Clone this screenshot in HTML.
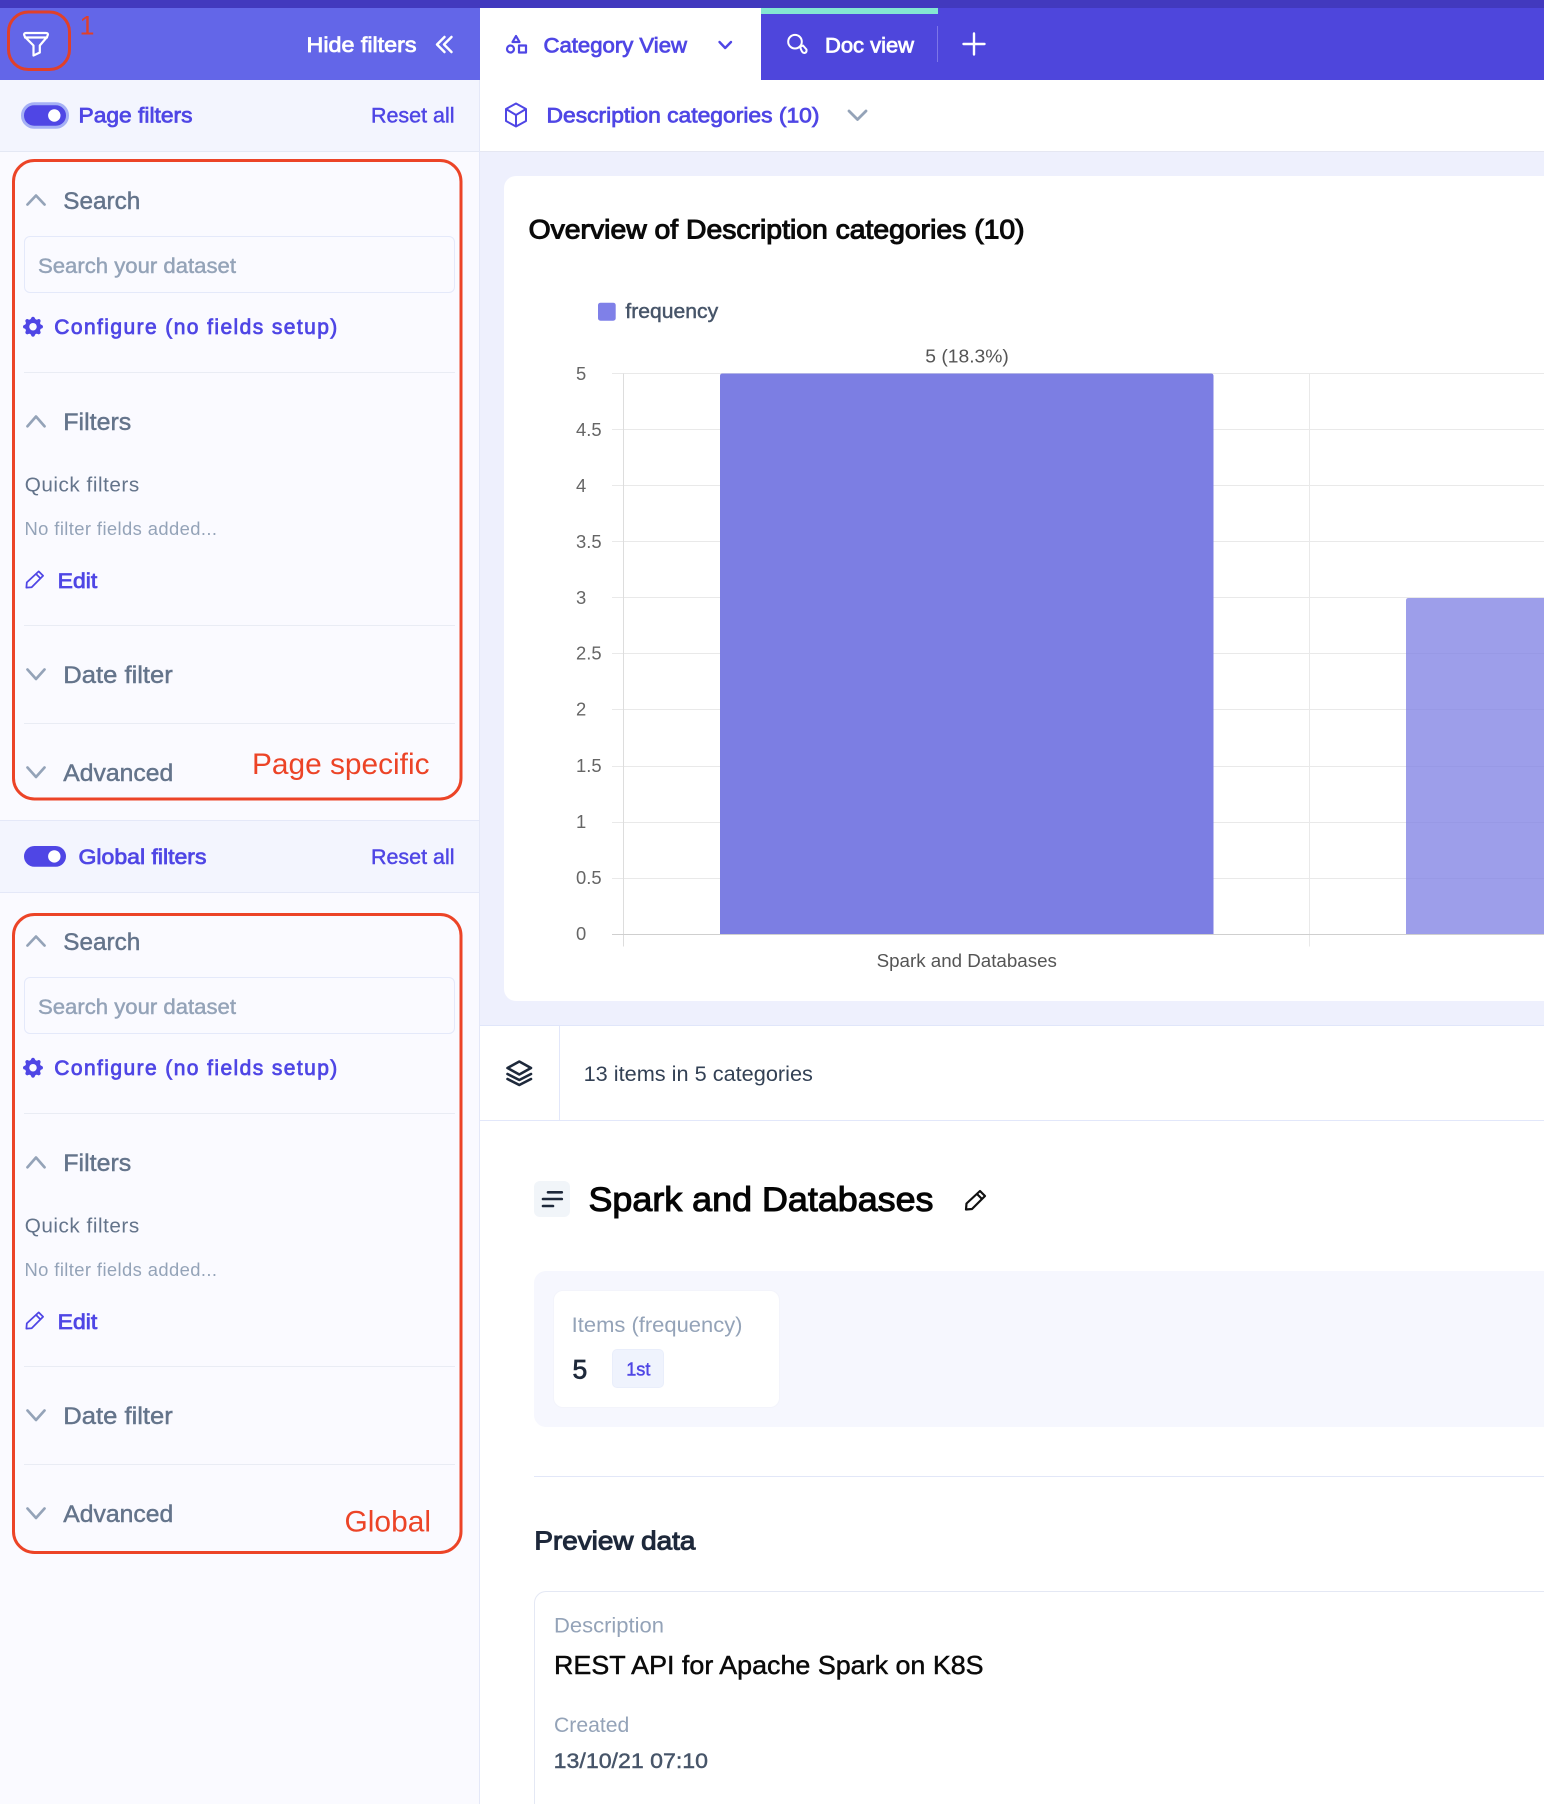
<!DOCTYPE html>
<html lang="en">
<head>
<meta charset="utf-8">
<title>Category View</title>
<style>
html,body{margin:0;padding:0;width:1544px;height:1804px;overflow:hidden;background:#fff;font-family:"Liberation Sans",sans-serif}
#page{position:relative;width:1544px;height:1804px;overflow:hidden;background:#fff}
.b{position:absolute;box-sizing:border-box}
svg{position:absolute;left:0;top:0;display:block}
text{font-family:"Liberation Sans",sans-serif;white-space:pre}
.m{stroke-width:.45px}
.s{stroke-width:.75px}
.t{stroke-width:1.05px}
.ind{fill:#4F46E5;stroke:#4F46E5}
.sl{fill:#64748B;stroke:#64748B}
.mut{fill:#94A3B8;stroke:#94A3B8}
.wh{fill:#fff;stroke:#fff}
.red{fill:#EC4427;font-size:29.5px}
.ic{fill:none;stroke-linecap:round;stroke-linejoin:round}
</style>
</head>
<body>
<div id="page">
<!-- top strip and header -->
<div class="b" style="left:0;top:0;width:1544px;height:8px;background:#4239BE"></div>
<div class="b" style="left:0;top:8px;width:480px;height:72px;background:#6366E8"></div>
<div class="b" style="left:480px;top:8px;width:281px;height:72px;background:#fff"></div>
<div class="b" style="left:761px;top:8px;width:783px;height:72px;background:#4E46DC"></div>
<div class="b" style="left:761px;top:8px;width:177px;height:6px;background:#84E7D2"></div>
<div class="b" style="left:937px;top:26px;width:1px;height:36px;background:#7D76E8"></div>
<!-- sidebar -->
<div class="b" style="left:0;top:80px;width:480px;height:1724px;background:#FAFAFF;border-right:1px solid #E4E8F8"></div>
<div class="b" style="left:0;top:80px;width:479px;height:72px;background:#F3F5FE;border-bottom:1px solid #E4E8F4"></div>
<div class="b" style="left:0;top:820px;width:479px;height:73px;background:#F3F5FE;border-top:1px solid #E4E8F8;border-bottom:1px solid #E4E8F8"></div>
<!-- main sub header -->
<div class="b" style="left:480px;top:151px;width:1064px;height:875px;background:#EEF0FD;border-top:1px solid #E5E7F2;border-bottom:1px solid #E0E6FA"></div>
<div class="b" style="left:504px;top:176px;width:1040px;height:825px;background:#fff;border-radius:12px 0 0 12px"></div>
<div class="b" style="left:480px;top:1120px;width:1064px;height:1px;background:#E2E7FA"></div>
<div class="b" style="left:559px;top:1026px;width:1px;height:94px;background:#E2E7FA"></div>
<!-- panels -->
<div class="b" style="left:534px;top:1181px;width:36px;height:36px;background:#F1F5F9;border-radius:6px"></div>
<div class="b" style="left:534px;top:1271px;width:1010px;height:156px;background:#F6F7FE;border-radius:12px 0 0 12px"></div>
<div class="b" style="left:553px;top:1290px;width:227px;height:118px;background:#fff;border-radius:10px;border:1px solid #F3F4FB"></div>
<div class="b" style="left:612px;top:1349px;width:52px;height:39px;background:#EFF3FD;border-radius:5px;border:1px solid #E9EEFB"></div>
<div class="b" style="left:534px;top:1476px;width:1010px;height:1px;background:#E2E7F8"></div>
<div class="b" style="left:534px;top:1591px;width:1010px;height:213px;background:#fff;border-radius:12px 0 0 0;border:1px solid #E4E8F4;border-right:0;border-bottom:0"></div>
<!-- inputs -->
<div class="b" style="left:24px;top:236px;width:431px;height:57px;border:1px solid #E4E9FA;border-radius:6px"></div>
<div class="b" style="left:24px;top:977px;width:431px;height:57px;border:1px solid #E4E9FA;border-radius:6px"></div>
<!-- sidebar dividers -->
<div class="b" style="left:24px;top:372px;width:431px;height:1px;background:#E9ECF4"></div>
<div class="b" style="left:24px;top:625px;width:431px;height:1px;background:#E9ECF4"></div>
<div class="b" style="left:24px;top:723px;width:431px;height:1px;background:#E9ECF4"></div>
<div class="b" style="left:24px;top:1113px;width:431px;height:1px;background:#E9ECF4"></div>
<div class="b" style="left:24px;top:1366px;width:431px;height:1px;background:#E9ECF4"></div>
<div class="b" style="left:24px;top:1464px;width:431px;height:1px;background:#E9ECF4"></div>

<svg width="1544" height="1804" viewBox="0 0 1544 1804" xmlns="http://www.w3.org/2000/svg">
  <!-- header left -->
  <rect x="8.5" y="12" width="61" height="57.5" rx="20" fill="none" stroke="#E0402A" stroke-width="3"/>
  <text x="79.5" y="34.5" fill="#E0402A" font-size="27">1</text>
  <path class="ic" d="M26 33H46Q48.3 33 47.8 35L47 37L39.8 45.5V52.5L33.5 55.5V45.5L25 37L24.2 35Q23.8 33 26 33ZM25 37.5H47" stroke="#fff" stroke-width="2.2"/>
  <text class="wh s" x="306.5" y="52" font-size="21" textLength="110" lengthAdjust="spacingAndGlyphs">Hide filters</text>
  <path class="ic" d="M444.5 37L437 44.5L444.5 52M451.5 37L444 44.5L451.5 52" stroke="#fff" stroke-width="2.5"/>

  <!-- tabs -->
  <g class="ic" stroke="#4F46E5" stroke-width="2.2">
    <path d="M516 36L519.5 42H512.5Z"/>
    <circle cx="510.5" cy="49" r="3.5"/>
    <rect x="519" y="45.5" width="7" height="7"/>
  </g>
  <text class="ind s" x="543.5" y="52.3" font-size="21" textLength="143.5" lengthAdjust="spacingAndGlyphs">Category View</text>
  <path class="ic" d="M719.5 42L725.2 48L731 42" stroke="#4F46E5" stroke-width="2.4"/>
  <g class="ic" stroke="#fff" stroke-width="2">
    <circle cx="795" cy="41.7" r="6.8"/>
    <path d="M800 47L803 45.5L806.5 49.5Q807 52.5 804.5 53Q802.5 53 801.5 50.5Z"/>
  </g>
  <text class="wh s" x="825" y="52.3" font-size="21" textLength="89" lengthAdjust="spacingAndGlyphs">Doc view</text>
  <path d="M963.5 44H984.5M974 33.5V54.5" stroke="#fff" stroke-width="2.4" stroke-linecap="round"/>

  <!-- page filter header -->
  <rect x="22.5" y="103.8" width="45" height="23.5" rx="11.7" fill="#4F46E5" stroke="#A5B0F5" stroke-width="3"/>
  <circle cx="54.3" cy="115.5" r="6.2" fill="#fff"/>
  <text class="ind s" x="78.5" y="122.7" font-size="21" textLength="114" lengthAdjust="spacingAndGlyphs">Page filters</text>
  <text class="ind m" x="371" y="122.7" font-size="21" textLength="83.5" lengthAdjust="spacingAndGlyphs">Reset all</text>

  <!-- sub header -->
  <g class="ic" stroke="#4F46E5" stroke-width="2">
    <path d="M516 103.5L526 109V121L516 126.5L506 121V109ZM506 109L516 115L526 109M516 115V126.5"/>
  </g>
  <text class="ind s" x="546.5" y="122.7" font-size="21" textLength="273" lengthAdjust="spacingAndGlyphs">Description categories (10)</text>
  <path class="ic" d="M849 111L857.5 119.5L866 111" stroke="#94A3B8" stroke-width="2.8"/>

  <!-- red boxes -->
  <rect x="13.5" y="160.5" width="447.5" height="638.5" rx="21" fill="none" stroke="#EC4427" stroke-width="3"/>
  <rect x="13.5" y="914.5" width="447.5" height="638" rx="21" fill="none" stroke="#EC4427" stroke-width="3"/>
  <text class="red" x="252" y="774" textLength="177.5" lengthAdjust="spacingAndGlyphs">Page specific</text>
  <text class="red" x="344.5" y="1531.7" textLength="86.5" lengthAdjust="spacingAndGlyphs">Global</text>

  <!-- page section -->
  <g>
    <path class="ic" d="M27.5 204.5L36 195.5L44.5 204.5" stroke="#94A3B8" stroke-width="2.7"/>
    <text class="sl m" x="63.3" y="209" font-size="24" textLength="77" lengthAdjust="spacingAndGlyphs">Search</text>
    <text class="mut m" x="38" y="272.8" font-size="21" textLength="198" lengthAdjust="spacingAndGlyphs">Search your dataset</text>
    <path fill="#4F46E5" fill-rule="evenodd" transform="translate(20.5 314.2) scale(1.25)" d="M11.49 3.17c-.38-1.56-2.6-1.56-2.98 0a1.532 1.532 0 01-2.286.948c-1.372-.836-2.942.734-2.106 2.106.54.886.061 2.042-.947 2.287-1.561.379-1.561 2.6 0 2.978a1.532 1.532 0 01.947 2.287c-.836 1.372.734 2.942 2.106 2.106a1.532 1.532 0 012.287.947c.379 1.561 2.6 1.561 2.978 0a1.533 1.533 0 012.287-.947c1.372.836 2.942-.734 2.106-2.106a1.533 1.533 0 01.947-2.287c1.561-.379 1.561-2.6 0-2.978a1.532 1.532 0 01-.947-2.287c.836-1.372-.734-2.942-2.106-2.106a1.532 1.532 0 01-2.287-.947zM10 13a3 3 0 100-6 3 3 0 000 6z"/>
    <text class="ind s" x="54.3" y="334" font-size="21" textLength="283" lengthAdjust="spacing">Configure (no fields setup)</text>
    <path class="ic" d="M27.5 426.3L36 416.5L44.5 426.3" stroke="#94A3B8" stroke-width="2.7"/>
    <text class="sl m" x="63.3" y="430" font-size="24" textLength="68" lengthAdjust="spacingAndGlyphs">Filters</text>
    <text fill="#64748B" x="24.7" y="491.5" font-size="20.7" textLength="114.5" lengthAdjust="spacing">Quick filters</text>
    <text fill="#94A3B8" x="24.5" y="535.2" font-size="18.4" textLength="192.5" lengthAdjust="spacing">No filter fields added...</text>
    <path class="ic" stroke="#4F46E5" stroke-width="2" transform="translate(25.5 570.5) scale(.88)" d="M1 19.5L1.5 13.5L15 1L20 6L7 19ZM12 4L17 9"/>
    <text class="ind s" x="57.7" y="588" font-size="21" textLength="39.5" lengthAdjust="spacingAndGlyphs">Edit</text>
    <path class="ic" d="M27.5 669.5L36 679L44.5 669.5" stroke="#94A3B8" stroke-width="2.7"/>
    <text class="sl m" x="63.3" y="683.2" font-size="24" textLength="109.5" lengthAdjust="spacingAndGlyphs">Date filter</text>
    <path class="ic" d="M27.5 767.5L36 777L44.5 767.5" stroke="#94A3B8" stroke-width="2.7"/>
    <text class="sl m" x="63.3" y="781" font-size="24" textLength="110" lengthAdjust="spacingAndGlyphs">Advanced</text>
  </g>

  <!-- global header -->
  <rect x="24" y="846" width="42" height="20.8" rx="10.4" fill="#4F46E5"/>
  <circle cx="54.3" cy="856.4" r="6.2" fill="#fff"/>
  <text class="ind s" x="78.5" y="864" font-size="21" textLength="128" lengthAdjust="spacingAndGlyphs">Global filters</text>
  <text class="ind m" x="371" y="864" font-size="21" textLength="83.5" lengthAdjust="spacingAndGlyphs">Reset all</text>

  <!-- global section -->
  <g transform="translate(0 741)">
    <path class="ic" d="M27.5 204.5L36 195.5L44.5 204.5" stroke="#94A3B8" stroke-width="2.7"/>
    <text class="sl m" x="63.3" y="209" font-size="24" textLength="77" lengthAdjust="spacingAndGlyphs">Search</text>
    <text class="mut m" x="38" y="272.8" font-size="21" textLength="198" lengthAdjust="spacingAndGlyphs">Search your dataset</text>
    <path fill="#4F46E5" fill-rule="evenodd" transform="translate(20.5 314.2) scale(1.25)" d="M11.49 3.17c-.38-1.56-2.6-1.56-2.98 0a1.532 1.532 0 01-2.286.948c-1.372-.836-2.942.734-2.106 2.106.54.886.061 2.042-.947 2.287-1.561.379-1.561 2.6 0 2.978a1.532 1.532 0 01.947 2.287c-.836 1.372.734 2.942 2.106 2.106a1.532 1.532 0 012.287.947c.379 1.561 2.6 1.561 2.978 0a1.533 1.533 0 012.287-.947c1.372.836 2.942-.734 2.106-2.106a1.533 1.533 0 01.947-2.287c1.561-.379 1.561-2.6 0-2.978a1.532 1.532 0 01-.947-2.287c.836-1.372-.734-2.942-2.106-2.106a1.532 1.532 0 01-2.287-.947zM10 13a3 3 0 100-6 3 3 0 000 6z"/>
    <text class="ind s" x="54.3" y="334" font-size="21" textLength="283" lengthAdjust="spacing">Configure (no fields setup)</text>
    <path class="ic" d="M27.5 426.3L36 416.5L44.5 426.3" stroke="#94A3B8" stroke-width="2.7"/>
    <text class="sl m" x="63.3" y="430" font-size="24" textLength="68" lengthAdjust="spacingAndGlyphs">Filters</text>
    <text fill="#64748B" x="24.7" y="491.5" font-size="20.7" textLength="114.5" lengthAdjust="spacing">Quick filters</text>
    <text fill="#94A3B8" x="24.5" y="535.2" font-size="18.4" textLength="192.5" lengthAdjust="spacing">No filter fields added...</text>
    <path class="ic" stroke="#4F46E5" stroke-width="2" transform="translate(25.5 570.5) scale(.88)" d="M1 19.5L1.5 13.5L15 1L20 6L7 19ZM12 4L17 9"/>
    <text class="ind s" x="57.7" y="588" font-size="21" textLength="39.5" lengthAdjust="spacingAndGlyphs">Edit</text>
    <path class="ic" d="M27.5 669.5L36 679L44.5 669.5" stroke="#94A3B8" stroke-width="2.7"/>
    <text class="sl m" x="63.3" y="683.2" font-size="24" textLength="109.5" lengthAdjust="spacingAndGlyphs">Date filter</text>
    <path class="ic" d="M27.5 767.5L36 777L44.5 767.5" stroke="#94A3B8" stroke-width="2.7"/>
    <text class="sl m" x="63.3" y="781" font-size="24" textLength="110" lengthAdjust="spacingAndGlyphs">Advanced</text>
  </g>

  <!-- chart -->
  <text x="528.6" y="238.5" fill="#0a0a0a" stroke="#0a0a0a" class="t" font-size="26.5" textLength="496" lengthAdjust="spacingAndGlyphs">Overview of Description categories (10)</text>
  <rect x="598" y="302.7" width="17.7" height="18" rx="2.5" fill="#7F80E8"/>
  <text x="625.4" y="318" fill="#475569" stroke="#475569" class="m" font-size="20" textLength="92.8" lengthAdjust="spacingAndGlyphs">frequency</text>
  <g stroke="#E9E9E9" stroke-width="1">
    <path d="M612 373.5H1544M612 429.5H1544M612 485.5H1544M612 541.5H1544M612 597.5H1544M612 653.5H1544M612 709.5H1544M612 766.5H1544M612 822.5H1544M612 878.5H1544"/>
    <path d="M1309.5 373.5V946.5"/>
  </g>
  <path d="M623.5 373.5V946.5" stroke="#DDDDDD"/>
  <path d="M612 934.5H1544" stroke="#CFCFCF"/>
  <g fill="#666" font-size="18.4">
    <text x="576" y="380">5</text><text x="576" y="436">4.5</text><text x="576" y="492">4</text><text x="576" y="548">3.5</text><text x="576" y="604">3</text><text x="576" y="659.7">2.5</text><text x="576" y="715.7">2</text><text x="576" y="772">1.5</text><text x="576" y="828">1</text><text x="576" y="884">0.5</text><text x="576" y="940">0</text>
  </g>
  <path d="M720 934V376q0-2.5 2.5-2.5H1211q2.5 0 2.5 2.5V934Z" fill="#7C7EE3"/>
  <path d="M1406 934V600.5q0-2.5 2.5-2.5H1544V934Z" fill="#7C7EE3" fill-opacity=".75"/>
  <text x="925.3" y="362.3" fill="#555" font-size="18.4" textLength="83.5" lengthAdjust="spacingAndGlyphs">5 (18.3%)</text>
  <text x="876.6" y="967" fill="#555" font-size="18.4" textLength="180.3" lengthAdjust="spacingAndGlyphs">Spark and Databases</text>

  <!-- items row -->
  <g class="ic" stroke="#1E293B" stroke-width="2.6">
    <path d="M519.3 1061.5L531 1068L519.3 1074.5L507.5 1068Z"/>
    <path d="M507.5 1074L519.3 1080L531 1074M507.5 1079L519.3 1085L531 1079"/>
  </g>
  <text fill="#334155" x="583.6" y="1081" font-size="21" textLength="229.3" lengthAdjust="spacingAndGlyphs">13 items in 5 categories</text>

  <!-- title -->
  <path d="M548 1192.3H561.8M543 1199H561.8M543 1206H553" stroke="#1E293B" stroke-width="2.6" stroke-linecap="round"/>
  <text x="588.5" y="1211.2" fill="#050505" stroke="#050505" class="t" font-size="34.5" textLength="345" lengthAdjust="spacingAndGlyphs">Spark and Databases</text>
  <path class="ic" stroke="#111" stroke-width="2.2" transform="translate(965 1190)" d="M1 19.5L1.5 13.5L15 1L20 6L7 19ZM12 4L17 9"/>

  <!-- stat card -->
  <text fill="#94A3B8" x="571.7" y="1332" font-size="21" textLength="170.8" lengthAdjust="spacingAndGlyphs">Items (frequency)</text>
  <text x="572.5" y="1378.3" fill="#1E293B" stroke="#1E293B" class="s" font-size="26.5">5</text>
  <text class="ind m" x="626.2" y="1375.5" font-size="18.5" textLength="24.2" lengthAdjust="spacingAndGlyphs">1st</text>

  <!-- preview -->
  <text x="534.4" y="1549.3" fill="#1E293B" stroke="#1E293B" class="t" font-size="26" textLength="161" lengthAdjust="spacingAndGlyphs">Preview data</text>
  <text fill="#94A3B8" x="554" y="1632.7" font-size="21" textLength="110" lengthAdjust="spacingAndGlyphs">Description</text>
  <text x="554" y="1674" fill="#0a0a0a" stroke="#0a0a0a" class="m" font-size="26" textLength="429.6" lengthAdjust="spacingAndGlyphs">REST API for Apache Spark on K8S</text>
  <text fill="#94A3B8" x="554" y="1732" font-size="21" textLength="75.3" lengthAdjust="spacingAndGlyphs">Created</text>
  <text x="553.7" y="1768" fill="#475569" stroke="#475569" class="m" font-size="21.5" textLength="154.3" lengthAdjust="spacingAndGlyphs">13/10/21 07:10</text>
</svg>
</div>
</body>
</html>
